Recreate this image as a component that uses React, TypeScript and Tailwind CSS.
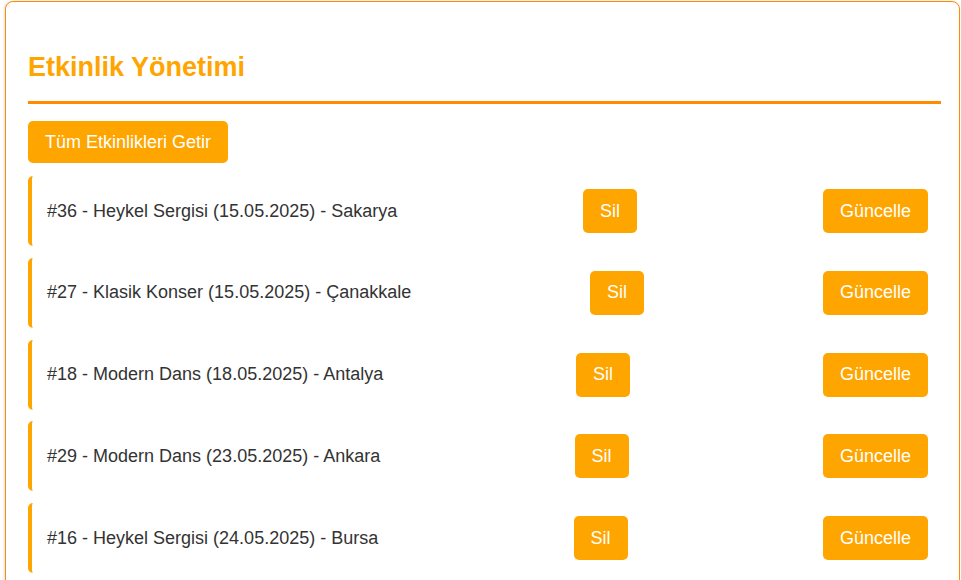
import React from 'react';

interface Etkinlik {
    id: number;
    ad: string;
    tarih: string;
    sehir: string;
}

const etkinlikler: Etkinlik[] = [
    { id: 36, ad: 'Heykel Sergisi', tarih: '15.05.2025', sehir: 'Sakarya' },
    { id: 27, ad: 'Klasik Konser', tarih: '15.05.2025', sehir: 'Çanakkale' },
    { id: 18, ad: 'Modern Dans', tarih: '18.05.2025', sehir: 'Antalya' },
    { id: 29, ad: 'Modern Dans', tarih: '23.05.2025', sehir: 'Ankara' },
    { id: 16, ad: 'Heykel Sergisi', tarih: '24.05.2025', sehir: 'Bursa' },
];

const App: React.FC = () => {
    return (
        <div className="min-h-screen bg-white font-['Liberation_Sans',Arial,sans-serif] pl-[5px] pr-[1px] pt-[1px]">
            <div className="border border-[#ff8c00] rounded-lg bg-white shadow-[-1px_0_3px_rgba(0,0,0,0.12)] pl-[22px] pr-[18px] pt-[50px] pb-10">
                <h2 className="text-[27px] leading-[31px] font-bold text-[#ffa500] pb-[18px] border-b-[3px] border-[#ff8c00]">
                    Etkinlik Yönetimi
                </h2>
                <button className="mt-[17px] h-[42px] px-[17px] bg-[#ffa500] text-white text-[18px] rounded-[5px]">
                    Tüm Etkinlikleri Getir
                </button>
                <div className="mt-[13px] flex flex-col gap-[11.75px]">
                    {etkinlikler.map(e => (
                        <EtkinlikRow key={e.id} etkinlik={e} />
                    ))}
                </div>
            </div>
        </div>
    );
};

const EtkinlikRow: React.FC<{ etkinlik: Etkinlik }> = ({ etkinlik }) => (
    <div className="h-[70px] flex items-center justify-between border-l-4 border-[#ffa500] rounded-l-[5px] bg-white pl-[15px] pr-[13px]">
        <span className="text-[18px] text-[#333]">
            #{etkinlik.id} - {etkinlik.ad} ({etkinlik.tarih}) - {etkinlik.sehir}
        </span>
        <button className="h-[44px] px-[17px] bg-[#ffa500] text-white text-[18px] rounded-[5px]">Sil</button>
        <button className="h-[44px] px-[17px] bg-[#ffa500] text-white text-[18px] rounded-[5px]">Güncelle</button>
    </div>
);

export default App;
